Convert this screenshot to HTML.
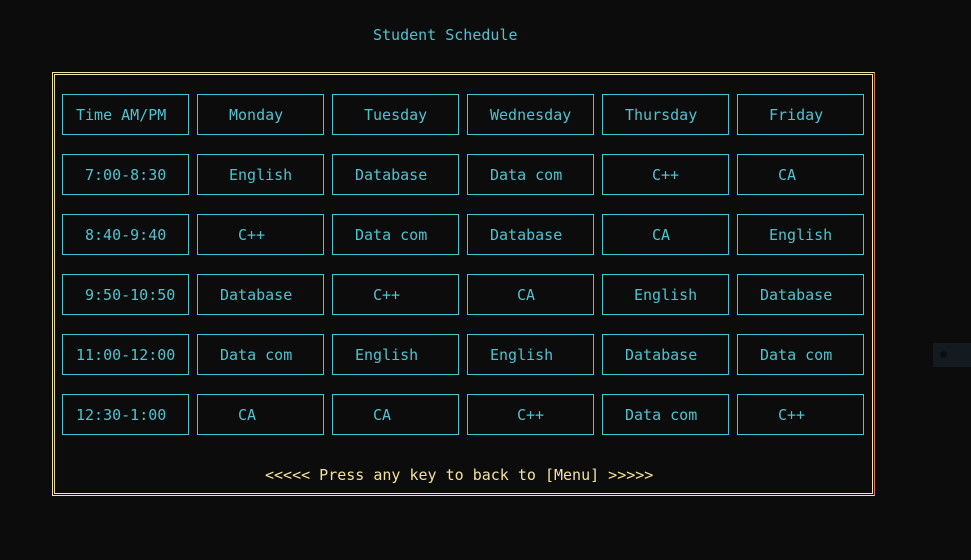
<!DOCTYPE html>
<html><head><style>
body{margin:0;width:971px;height:560px;background:#0c0c0c;position:relative;overflow:hidden;font-family:"DejaVu Sans Mono","Liberation Mono",monospace;font-size:15px;}
.t{position:absolute;color:#4ec3cf;line-height:18px;white-space:pre;}
.c{position:absolute;width:125px;height:39px;border:1px solid #3fc9d6;}
.o1{position:absolute;left:52px;top:72px;width:821px;height:422px;border:1px solid #f2e3a0;border-right-color:#e07a3a;}
.o2{position:absolute;left:54px;top:74px;width:817px;height:418px;border:1px solid #f2e8b8;border-left-color:#e6e070;}
</style></head><body>
<div class="t" style="left:373px;top:26px">Student Schedule</div>
<div class="o1"></div><div class="o2"></div>
<div style="position:absolute;left:933px;top:343px;width:38px;height:24px;background:#141b20"></div>
<div style="position:absolute;left:940px;top:351px;width:7px;height:7px;border-radius:50%;background:#0b0f12"></div>
<div id="g"></div>
<div class="t" style="left:265px;top:466px;color:#f3e29a">&lt;&lt;&lt;&lt;&lt; Press any key to back to [Menu] &gt;&gt;&gt;&gt;&gt;</div>
<script>
var xs=[62,197,332,467,602,737];
var rows=[
[["Time AM/PM",76],["Monday",229],["Tuesday",364],["Wednesday",490],["Thursday",625],["Friday",769]],
[["7:00-8:30",85],["English",229],["Database",355],["Data com",490],["C++",652],["CA",778]],
[["8:40-9:40",85],["C++",238],["Data com",355],["Database",490],["CA",652],["English",769]],
[["9:50-10:50",85],["Database",220],["C++",373],["CA",517],["English",634],["Database",760]],
[["11:00-12:00",76],["Data com",220],["English",355],["English",490],["Database",625],["Data com",760]],
[["12:30-1:00",76],["CA",238],["CA",373],["C++",517],["Data com",625],["C++",778]]];
var h="";
rows.forEach(function(r,i){var y=94+60*i;r.forEach(function(c,j){
h+='<div class="c" style="left:'+xs[j]+'px;top:'+y+'px"></div>';
h+='<div class="t" style="left:'+c[1]+'px;top:'+(y+12)+'px">'+c[0]+'</div>';});});
document.getElementById("g").innerHTML=h;
</script>
</body></html>
